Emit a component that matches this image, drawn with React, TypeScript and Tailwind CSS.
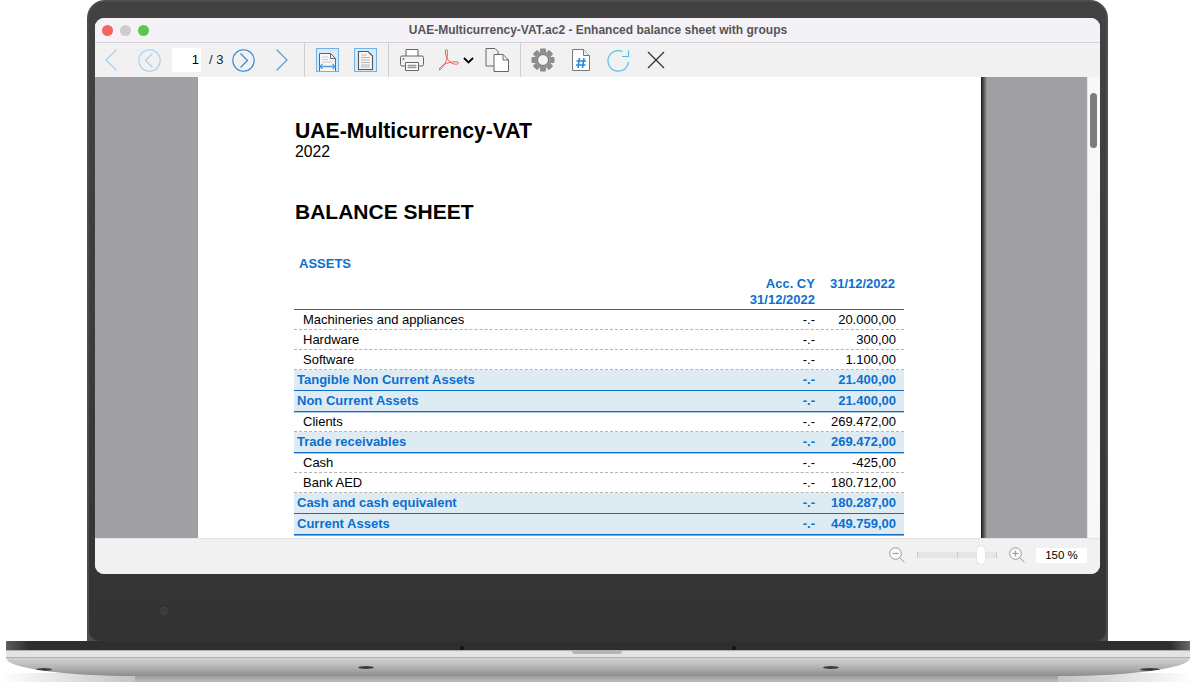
import type { ReactNode } from 'react'

const SANS = 'font-["Liberation_Sans",Arial,sans-serif]'

type Row = { label: string; acc: string; value: string; total?: boolean; line: 'dash' | 'blue' }

const ROWS: Row[] = [
  { label: 'Machineries and appliances', acc: '-.-', value: '20.000,00', line: 'dash' },
  { label: 'Hardware', acc: '-.-', value: '300,00', line: 'dash' },
  { label: 'Software', acc: '-.-', value: '1.100,00', line: 'dash' },
  { label: 'Tangible Non Current Assets', acc: '-.-', value: '21.400,00', total: true, line: 'blue' },
  { label: 'Non Current Assets', acc: '-.-', value: '21.400,00', total: true, line: 'blue' },
  { label: 'Clients', acc: '-.-', value: '269.472,00', line: 'dash' },
  { label: 'Trade receivables', acc: '-.-', value: '269.472,00', total: true, line: 'blue' },
  { label: 'Cash', acc: '-.-', value: '-425,00', line: 'dash' },
  { label: 'Bank AED', acc: '-.-', value: '180.712,00', line: 'dash' },
  { label: 'Cash and cash equivalent', acc: '-.-', value: '180.287,00', total: true, line: 'blue' },
  { label: 'Current Assets', acc: '-.-', value: '449.759,00', total: true, line: 'blue' },
]

function ReportRow({ row }: { row: Row }) {
  return (
    <div
      className={`flex items-center border-b text-[13px] leading-[15px] ${row.total ? 'h-[21px] bg-[#deebf3] pb-[1px] font-bold text-[#0a6fd0]' : 'h-[20px] text-black'} ${row.line === 'blue' ? 'border-solid border-[#0f6fc6] shadow-[0_1px_0_rgba(15,111,198,0.35)]' : 'border-dashed border-[#b4b4b4]'}`}
    >
      <span className={`flex-1 ${row.total ? 'pl-[3px]' : 'pl-[9px]'}`}>{row.label}</span>
      <span className="w-[60px] text-right">{row.acc}</span>
      <span className="ml-[1px] mr-[8px] w-[80px] text-right">{row.value}</span>
    </div>
  )
}

function Svg({ w, h, className, children }: { w: number; h: number; className?: string; children: ReactNode }) {
  return (
    <svg width={w} height={h} viewBox={`0 0 ${w} ${h}`} fill="none" className={`shrink-0 ${className ?? ''}`}>
      {children}
    </svg>
  )
}

function Chevron({ right, className }: { right?: boolean; className?: string }) {
  return (
    <Svg w={13} h={24} className={className}>
      <path
        d={right ? 'M1.5 1.5 12 12 1.5 22.5' : 'M11.5 1.5 1 12l10.500 10.500'}
        stroke={right ? '#4f9fe0' : '#a5cfee'}
        strokeWidth="1.2"
      />
    </Svg>
  )
}

function CircleNav({ right, className }: { right?: boolean; className?: string }) {
  const color = right ? '#2c86d8' : '#a5cfee'
  return (
    <Svg w={23} h={23} className={className}>
      <circle cx="11.5" cy="11.5" r="10.7" stroke={color} strokeWidth="1.1" />
      <path d={right ? 'M8.5 4.5 15.5 11.5 8.5 18.5' : 'M14.5 4.5 7.5 11.5 14.5 18.5'} stroke={color} strokeWidth="1.1" />
    </Svg>
  )
}

function DocFrame({ children }: { children: ReactNode }) {
  return (
    <div className="flex h-[24px] w-[23px] shrink-0 items-end justify-center border border-[#6fb3e8] bg-[#dce9f4]">
      {children}
    </div>
  )
}

function FitWidthIcon() {
  return (
    <DocFrame>
      <Svg w={21} h={20}>
        <path d="M2.5 20V2.5h11l5 5V20" fill="#f7f7f7" stroke="#666" />
        <path d="M13.5 2.5v5h5" stroke="#666" />
        <path d="M5 6h6M5 8.5h6M5 11h11" stroke="#ccc" />
        <path d="M3 15.5h15" stroke="#4f9fe0" strokeWidth="1.3" />
        <path d="M5.5 13 3 15.5 5.5 18M15.500 13l2.500 2.500-2.500 2.500" stroke="#4f9fe0" strokeWidth="1.3" />
      </Svg>
    </DocFrame>
  )
}

function FitPageIcon() {
  return (
    <DocFrame>
      <Svg w={17} h={21}>
        <path d="M1.5 19.5v-18H11L15.5 6v13.5z" fill="#f7f7f7" stroke="#555" strokeWidth="1.1" />
        <path d="M4 5h6M4 7.5h9M4 10h9M4 12.5h9M4 15h9M4 17h9" stroke="#b5b5b5" />
      </Svg>
    </DocFrame>
  )
}

function PrintIcon({ className }: { className?: string }) {
  return (
    <Svg w={24} h={24} className={className}>
      <path d="M6 8V1.5h12V8" fill="#fff" stroke="#666" />
      <rect x="0.5" y="8" width="23" height="10" rx="1.5" fill="#f2f2f2" stroke="#666" />
      <circle cx="3.5" cy="11" r="1" fill="#2f86cf" />
      <path d="M5.5 14.5h13v8h-13z" fill="#fff" stroke="#666" />
      <path d="M7.5 17.5h9M7.5 19.5h9" stroke="#999" strokeWidth="1.5" />
    </Svg>
  )
}

function PdfIcon({ className }: { className?: string }) {
  return (
    <Svg w={22} h={24} className={className}>
      <path
        d="M1.5 22c2-.8 5-5 6.800-9.500C9.500 9.500 10.200 1.500 8.300 1.500 6.500 1.500 7.500 8 9.800 11.500c1.800 2.800 5 4.500 7.500 4.700 2.500.2 3.800-1 3-1.900-1-1.100-6-.6-10.500.6C5.500 16.200 1 19.500 1.500 22Z"
        stroke="#ea5a55"
        strokeWidth="1"
      />
    </Svg>
  )
}

function CopyIcon({ className }: { className?: string }) {
  return (
    <Svg w={24} h={24} className={className}>
      <path d="M1 .5h9l3 3V18H1z" fill="#f2f2f2" stroke="#666" />
      <path d="M9 6.5h9l5.500 5.500v11.500H9z" fill="#fff" stroke="#666" />
      <path d="M18 6.5V12h5.500" stroke="#666" />
    </Svg>
  )
}

function GearIcon({ className }: { className?: string }) {
  const teeth = [0, 45, 90, 135, 180, 225, 270, 315]
  return (
    <Svg w={24} h={24} className={className}>
      {teeth.map((deg) => (
        <rect key={deg} x="9" y="0.5" width="6" height="6" rx="1" fill="#8c8c8c" transform={`rotate(${deg} 12 12)`} />
      ))}
      <circle cx="12" cy="12" r="8" fill="#949494" />
      <circle cx="12" cy="12" r="5.5" fill="#f1f1f1" stroke="#707070" />
    </Svg>
  )
}

function HashDocIcon({ className }: { className?: string }) {
  return (
    <Svg w={18} h={22} className={className}>
      <path d="M.5 21.500V.5h11l6 6v15z" fill="#fff" stroke="#777" />
      <path d="M11.5.5v6h6" fill="#eee" stroke="#777" />
      <path d="M7.5 9 6 19M12 9l-1.500 10M4.500 12H14M4 16h9.500" stroke="#2c86d8" strokeWidth="1.6" />
    </Svg>
  )
}

function RefreshIcon({ className }: { className?: string }) {
  return (
    <Svg w={23} h={23} className={className}>
      <path d="M21.5 13a10.300 10.300 0 1 1-6-10.500" stroke="#55c1de" strokeWidth="1.2" />
      <path d="M21.5 1.5v6H15" stroke="#55c1de" strokeWidth="1.2" />
    </Svg>
  )
}

function CloseIcon({ className }: { className?: string }) {
  return (
    <Svg w={18} h={18} className={className}>
      <path d="M1 1l16 16M17 1 1 17" stroke="#333" strokeWidth="1.3" />
    </Svg>
  )
}

function Magnifier({ plus, className }: { plus?: boolean; className?: string }) {
  return (
    <Svg w={16} h={16} className={className}>
      <circle cx="6.5" cy="6.5" r="5.8" fill="#fafafa" stroke="#9a9a9a" />
      <path d="M3.500 6.500h6" stroke="#6aaee6" strokeWidth="1.2" />
      {plus && <path d="M6.500 3.500v6" stroke="#6aaee6" strokeWidth="1.2" />}
      <path d="M10.800 10.800 15.500 15.500" stroke="#9a9a9a" />
    </Svg>
  )
}

function Toolbar() {
  return (
    <div className="flex h-[34px] shrink-0 items-center bg-[#f1f1f1] pl-[10px]">
      <Chevron />
      <CircleNav className="ml-[20px]" />
      <div className="ml-[11px] h-[24px] w-[29px] bg-white pr-[2px] text-right text-[13px] leading-[24px] text-black">1</div>
      <span className="ml-[8px] w-[15px] text-[13px] text-[#222]">/ 3</span>
      <CircleNav right className="ml-[8px]" />
      <Chevron right className="ml-[20px]" />
      <div className="ml-[16px] h-full w-px bg-[#cfcfcf]" />
      <div className="ml-[11px] flex items-center gap-[15px]">
        <FitWidthIcon />
        <FitPageIcon />
      </div>
      <div className="ml-[11px] h-full w-px bg-[#cfcfcf]" />
      <PrintIcon className="ml-[11px]" />
      <PdfIcon className="ml-[14px]" />
      <svg width="11" height="7" viewBox="0 0 11 7" className="ml-[3px] shrink-0" fill="none">
        <path d="M1 1l4.500 4.500L10 1" stroke="#000" strokeWidth="1.8" />
      </svg>
      <CopyIcon className="ml-[11px]" />
      <div className="ml-[11px] h-full w-px bg-[#cfcfcf]" />
      <GearIcon className="ml-[10px]" />
      <HashDocIcon className="ml-[17px]" />
      <RefreshIcon className="ml-[17px]" />
      <CloseIcon className="ml-[17px]" />
    </div>
  )
}

function Paper() {
  return (
    <div className="h-[461px] w-[783px] shrink-0 overflow-hidden bg-white pl-[97px] pr-[76px] pt-[42px] text-black">
      <div className="text-[21.2px] font-bold leading-[24px]">UAE-Multicurrency-VAT</div>
      <div className="text-[15.75px] leading-[18px]">2022</div>
      <div className="mt-[39px] text-[21px] font-bold leading-[24px]">BALANCE SHEET</div>
      <div className="mt-[32px] pl-[4px] text-[13px] font-bold leading-[15px] text-[#0a6fd0]">ASSETS</div>
      <div className="mt-[4px] flex justify-end text-[13px] font-bold leading-[15px] text-[#0a6fd0]">
        <div className="mt-[1px] text-right leading-[16px]">
          Acc. CY
          <br />
          31/12/2022
        </div>
        <div className="ml-[15px] mr-[10px] mt-[1px] leading-[16px]">31/12/2022</div>
      </div>
      <div className="-ml-[1px] mt-[1px] w-[610px] border-t border-[#0f6fc6] shadow-[0_1px_0_rgba(15,111,198,0.35)]">
        {ROWS.map((row) => (
          <ReportRow key={row.label} row={row} />
        ))}
      </div>
    </div>
  )
}

function StatusBar() {
  return (
    <div className="flex h-[36px] shrink-0 items-center justify-end border-t border-[#e4e4e4] bg-[#f1f1f1] pb-[3px] pr-[13px]">
      <Magnifier />
      <div className="relative ml-[12px] flex h-[6px] w-[80px] items-center justify-between bg-[#e6e6e6]">
        <span className="h-full w-px bg-[#c8c8c8]" />
        <span className="h-full w-px bg-[#c8c8c8]" />
        <span className="h-full w-px bg-[#c8c8c8]" />
        <span className="absolute left-[60px] top-[-6px] h-[18px] w-[8px] rounded-[4px] bg-white shadow-[0_0_1px_#aaa]" />
      </div>
      <Magnifier plus className="ml-[12px]" />
      <div className="ml-[11px] h-[15px] w-[51px] bg-white text-center text-[11.5px] leading-[15px] text-black">150 %</div>
    </div>
  )
}

function Screen() {
  return (
    <div className="flex h-[556px] flex-col overflow-hidden rounded-[9px] bg-[#f1f1f1]">
      <div className="flex h-[25px] shrink-0 items-center border-b border-[#d4d2d6] bg-[#f5f2f7]">
        <div className="flex gap-[7px] pl-[7px]">
          <span className="size-[11px] rounded-full bg-[#f4635d]" />
          <span className="size-[11px] rounded-full bg-[#cdcdcd]" />
          <span className="size-[11px] rounded-full bg-[#5fc454]" />
        </div>
        <div className="-ml-[53px] flex-1 text-center text-[12px] font-bold text-[#555]">
          UAE-Multicurrency-VAT.ac2 - Enhanced balance sheet with groups
        </div>
      </div>
      <Toolbar />
      <div className="flex h-[461px] shrink-0">
        <div className="flex flex-1 bg-[#a09fa4] pl-[103px]">
          <Paper />
          <div className="w-[6px] shrink-0 bg-gradient-to-r from-[#1c1c1c] to-[#a09fa4]" />
        </div>
        <div className="w-[13px] shrink-0 border-l border-[#e6e6e6] bg-[#f8f8f8] pl-[2px] pt-[16px]">
          <div className="h-[55px] w-[7px] rounded-full bg-[#7d7d7d]" />
        </div>
      </div>
      <StatusBar />
    </div>
  )
}

function Base() {
  return (
    <div className="relative flex flex-col">
      <div className="relative ml-[6px] mr-[3px] h-[9px] rounded-t-[1px] bg-gradient-to-r from-[#5c5c5c] via-[#2e2e2e] via-[2%] to-[#2e2e2e]">
        <span className="absolute left-[454px] top-[5px] size-[4px] rounded-full bg-[#111]" />
        <span className="absolute left-[726px] top-[5px] size-[4px] rounded-full bg-[#111]" />
        <span className="absolute inset-y-0 right-0 w-[20px] bg-gradient-to-r from-[#2e2e2e] to-[#6a6a6a]" />
      </div>
      <div className="relative ml-[6px] mr-[3px] h-[8px] border-y border-[#b0b0b0] bg-[#e4e4e4]">
        <span className="absolute left-[566px] top-0 h-[3px] w-[50px] rounded-b-[3px] bg-[#b4b4b4]" />
      </div>
      <div className="relative z-10 ml-[6px] mr-[3px] h-[18px] overflow-hidden rounded-b-[130px_18px] bg-gradient-to-b from-[#d2d2d2] via-[#b4b4b4] to-[#8c8c8c]">
        <span className="absolute left-[352px] top-[8px] h-[3px] w-[16px] rounded-[50%] bg-[#3c3c3c]" />
        <span className="absolute left-[817px] top-[8px] h-[3px] w-[16px] rounded-[50%] bg-[#3c3c3c]" />
        <span className="absolute left-[30px] top-[10px] h-[3px] w-[16px] rounded-[50%] bg-[#3c3c3c]" />
        <span className="absolute right-[30px] top-[10px] h-[3px] w-[20px] rounded-[50%] bg-[#3c3c3c]" />
      </div>
      <div className="-mt-[3px] flex h-[9px]">
        <div className="w-[135px] bg-gradient-to-r from-white to-[#c4c4c4]" />
        <div className="flex-1 bg-gradient-to-b from-[#8c8c8c] to-[#bdbdbd]" />
        <div className="w-[135px] bg-gradient-to-r from-[#c4c4c4] to-white" />
      </div>
    </div>
  )
}

export default function App() {
  return (
    <div className={`h-[682px] w-[1193px] overflow-hidden bg-white ${SANS}`}>
      <div className="ml-[87px] h-[641px] w-[1021px] rounded-t-[18px] bg-[#4d4d4d] px-[2px] pt-[2px]">
        <div className="h-full rounded-b-[10px] rounded-t-[15px] bg-gradient-to-b from-[#424242] via-[#3c3c3c] to-[#333] px-[6px] pt-[16px]">
          <Screen />
          <div className="relative h-[67px]">
            <span className="absolute left-[63px] top-[31px] size-[12px] rounded-full border border-[#2c2c2c] bg-[#3c3c3c]" />
          </div>
        </div>
      </div>
      <Base />
    </div>
  )
}
